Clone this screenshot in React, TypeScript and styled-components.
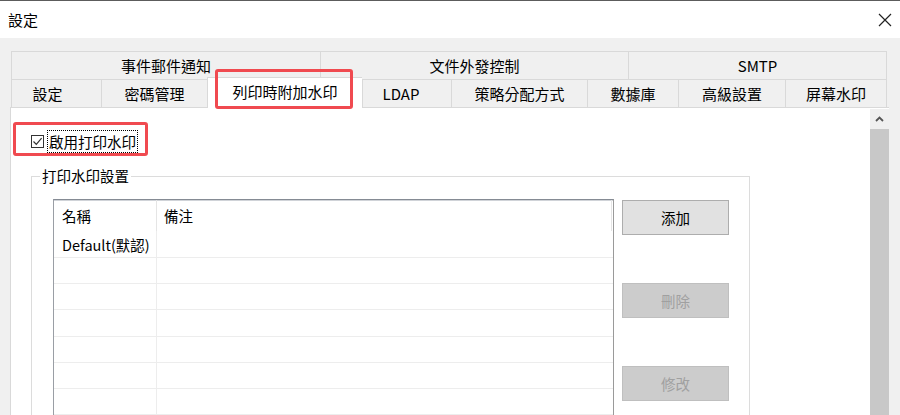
import React from "react";
import styled, { createGlobalStyle } from "styled-components";

const GlobalStyle = createGlobalStyle`
  html, body { margin: 0; padding: 0; background: #f0f0f0; }
  body {
    font-family: "Noto Sans CJK TC", "Noto Sans", sans-serif;
    color: #000;
  }
  * { box-sizing: border-box; }
`;

const Window = styled.div`
  width: 900px;
  height: 415px;
  overflow: hidden;
  display: flex;
  flex-direction: column;
  background: #f0f0f0;
  border-top: 1px solid #5c5c5c;
`;

const TitleBar = styled.div`
  height: 37px;
  flex: none;
  background: #fff;
  display: flex;
  align-items: center;
  justify-content: space-between;
  padding: 0 8px;
  font-size: 15px;
`;

const CloseIcon = styled.svg`
  width: 14px;
  height: 14px;
  display: block;
`;

const Body = styled.div`
  flex: 1;
  min-height: 0;
  display: flex;
  flex-direction: column;
  padding: 13px 11px 0 10px;
`;

const TabStrip = styled.div`
  margin: 0 2px 0 1px;
  display: flex;
  flex-direction: column;
  position: relative;
  z-index: 1;
`;

const TabRow = styled.div`
  display: flex;
  height: 28px;
`;

const Tab = styled.div<{ $w: number; $active?: boolean; $shift?: number }>`
  position: relative;
  flex: none;
  width: ${(p) => p.$w}px;
  height: ${(p) => (p.$active ? 31 : 28)}px;
  margin-top: ${(p) => (p.$active ? -2 : 0)}px;
  padding-bottom: ${(p) => (p.$active ? 3 : 0)}px;
  padding-right: ${(p) => p.$shift ?? 0}px;
  border-top: 1px solid #d9d9d9;
  border-left: 1px solid #d9d9d9;
  background: ${(p) => (p.$active ? "#fff" : "#f0f0f0")};
  display: flex;
  align-items: center;
  justify-content: center;
  font-size: 15px;
  white-space: nowrap;
  &:last-child {
    border-right: 1px solid #d9d9d9;
  }
`;

/* red annotation frame drawn over a control */
const Marker = styled.div<{ $l: number; $t: number; $w: number; $h: number }>`
  position: absolute;
  left: ${(p) => p.$l}px;
  top: ${(p) => p.$t}px;
  width: ${(p) => p.$w}px;
  height: ${(p) => p.$h}px;
  border: 3px solid #f04a50;
  border-radius: 3px;
  pointer-events: none;
`;

const Panel = styled.div`
  flex: 1;
  min-height: 0;
  display: flex;
  background: #fff;
  border-top: 1px solid #d9d9d9;
  border-left: 1px solid #d9d9d9;
`;

const Content = styled.div`
  flex: 1;
  min-width: 0;
  padding: 22px 0 0 19px;
`;

const ScrollTrack = styled.div`
  width: 19px;
  flex: none;
  margin-top: 1px;
  display: flex;
  flex-direction: column;
  background: #c8c8c8;
`;

const ScrollArrow = styled.div`
  height: 20px;
  background: #f0f0f0;
  display: flex;
  align-items: center;
  justify-content: center;
`;

const CheckRow = styled.label`
  position: relative;
  display: flex;
  width: fit-content;
  align-items: center;
  height: 23px;
  gap: 3px;
  font-size: 14.5px;
`;

const CheckBox = styled.span`
  width: 13px;
  height: 13px;
  margin-left: 1px;
  border: 1px solid #333;
  background: #fff;
  display: flex;
  align-items: center;
  justify-content: center;
`;

const FocusText = styled.span`
  border: 1px dotted #000;
  padding: 0 1px;
  line-height: 21px;
`;

const GroupBox = styled.fieldset`
  margin: 13px 0 0 1px;
  width: 719px;
  border: 1px solid #dcdcdc;
  padding: 13px 21px 0 21px;
  min-inline-size: 0;
`;

const GroupTitle = styled.legend`
  font-size: 14.5px;
  line-height: 20px;
  padding: 0 2px;
  margin-left: -13px;
`;

const GroupInner = styled.div`
  display: flex;
  gap: 8px;
  align-items: flex-start;
`;

const ListView = styled.div`
  width: 561px;
  height: 260px;
  flex: none;
  border: 1px solid #9a9a9a;
  border-top-color: #858b94;
  border-left-color: #9a9ea5;
  box-shadow: inset 0 1px 0 #d0d3d8;
  background: #fff;
  display: flex;
  flex-direction: column;
`;

const HeaderRow = styled.div`
  display: flex;
  height: 31px;
  flex: none;
`;

const HeaderCell = styled.div<{ $w: number; $pad: number }>`
  width: ${(p) => p.$w}px;
  flex: none;
  padding-left: ${(p) => p.$pad}px;
  border-right: 1px solid #e5e5e5;
  display: flex;
  align-items: center;
  font-size: 14.5px;
`;

const Row = styled.div<{ $h: number }>`
  display: flex;
  height: ${(p) => p.$h}px;
  flex: none;
  border-bottom: 1px solid #ededed;
`;

const Cell = styled.div<{ $w?: number }>`
  width: ${(p) => (p.$w ? `${p.$w}px` : "auto")};
  flex: ${(p) => (p.$w ? "none" : "1")};
  padding-left: 8px;
  border-right: ${(p) => (p.$w ? "1px solid #ededed" : "none")};
  display: flex;
  align-items: center;
  font-size: 14.5px;
  white-space: nowrap;
`;

const ButtonColumn = styled.div`
  display: flex;
  flex-direction: column;
  gap: 48px;
  padding-top: 1px;
`;

const Button = styled.button`
  width: 107px;
  height: 35px;
  padding: 0;
  font-family: inherit;
  font-size: 14.5px;
  color: #000;
  background: #e1e1e1;
  border: 1px solid #adadad;
  &:disabled {
    color: #a0a0a0;
    background: #cccccc;
    border-color: #bfbfbf;
  }
`;

const topTabs = [
  { label: "事件郵件通知", w: 309 },
  { label: "文件外發控制", w: 308 },
  { label: "SMTP", w: 259 },
];

const bottomTabs = [
  { label: "設定", w: 90, shift: 18 },
  { label: "密碼管理", w: 106 },
  { label: "列印時附加水印", w: 155, active: true },
  { label: "LDAP", w: 89, shift: 12 },
  { label: "策略分配方式", w: 136 },
  { label: "數據庫", w: 91 },
  { label: "高級設置", w: 107 },
  { label: "屏幕水印", w: 102 },
];

// row heights follow the list's uneven grid spacing
const rowHeights = [27, 26, 26, 27, 26, 26, 26, 26];
const rows = rowHeights.map((h, i) => ({ name: i === 0 ? "Default(默認)" : "", note: "", h }));

export default function App() {
  return (
    <>
      <GlobalStyle />
      <Window>
        <TitleBar>
          <span>設定</span>
          <CloseIcon viewBox="0 0 14 14">
            <path d="M1 1 L13 13 M13 1 L1 13" stroke="#222" strokeWidth="1.2" fill="none" />
          </CloseIcon>
        </TitleBar>
        <Body>
          <TabStrip>
            <TabRow>
              {topTabs.map((t) => (
                <Tab key={t.label} $w={t.w}>
                  {t.label}
                </Tab>
              ))}
            </TabRow>
            <TabRow>
              {bottomTabs.map((t) => (
                <Tab key={t.label} $w={t.w} $active={t.active} $shift={t.shift}>
                  {t.label}
                  {t.active && <Marker $l={7} $t={-9} $w={138} $h={40} />}
                </Tab>
              ))}
            </TabRow>
          </TabStrip>
          <Panel>
            <Content>
              <CheckRow>
                <CheckBox>
                  <svg width="11" height="11" viewBox="0 0 11 11">
                    <path d="M1.5 5.5 L4.3 8.3 L9.6 2.2" stroke="#333" strokeWidth="1.2" fill="none" />
                  </svg>
                </CheckBox>
                <FocusText>啟用打印水印</FocusText>
                <Marker $l={-17} $t={-8} $w={135} $h={34} />
              </CheckRow>
              <GroupBox>
                <GroupTitle>打印水印設置</GroupTitle>
                <GroupInner>
                  <ListView>
                    <HeaderRow>
                      <HeaderCell $w={103} $pad={8}>名稱</HeaderCell>
                      <HeaderCell $w={455} $pad={7}>備注</HeaderCell>
                    </HeaderRow>
                    {rows.map((r, i) => (
                      <Row key={i} $h={r.h}>
                        <Cell $w={103}>{r.name}</Cell>
                        <Cell>{r.note}</Cell>
                      </Row>
                    ))}
                  </ListView>
                  <ButtonColumn>
                    <Button>添加</Button>
                    <Button disabled>刪除</Button>
                    <Button disabled>修改</Button>
                  </ButtonColumn>
                </GroupInner>
              </GroupBox>
            </Content>
            <ScrollTrack>
              <ScrollArrow>
                <svg width="9" height="6" viewBox="0 0 9 6">
                  <path d="M1 5 L4.5 1.5 L8 5" stroke="#555" strokeWidth="1.8" fill="none" />
                </svg>
              </ScrollArrow>
            </ScrollTrack>
          </Panel>
        </Body>
      </Window>
    </>
  );
}
